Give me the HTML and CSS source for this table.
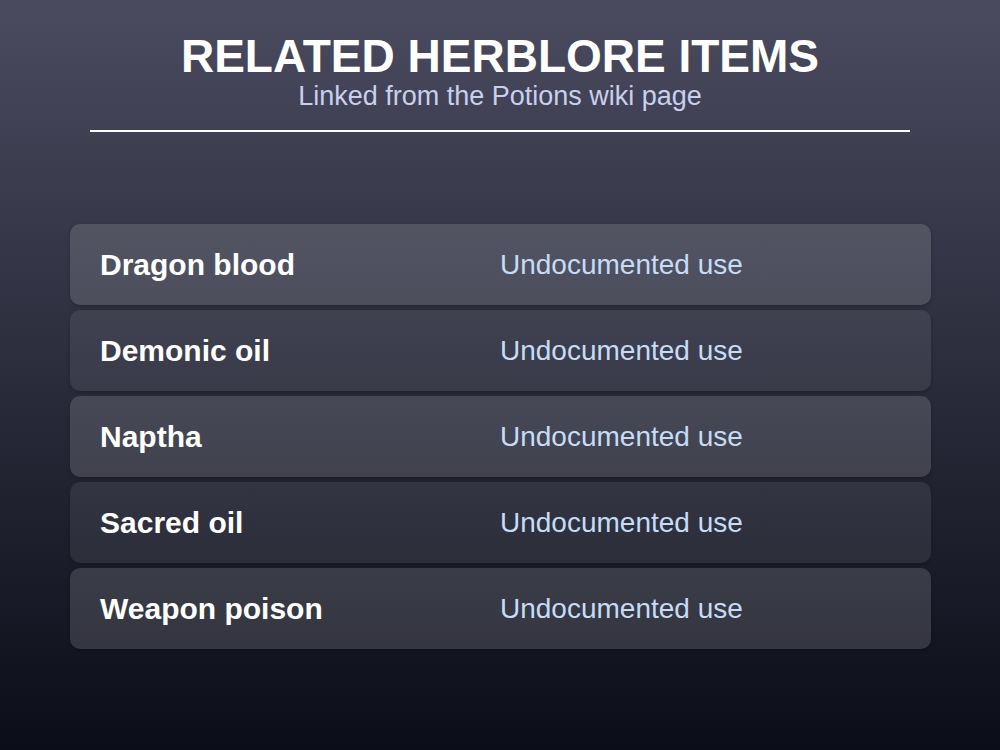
FILE: index.html
```html
<!DOCTYPE html>
<html lang="en">
<head>
  <meta charset="UTF-8" />
  <title>Related Herblore Items</title>
  <link rel="stylesheet" href="styles.css">
</head>
<body>

  <div class="header">
    <h1>RELATED HERBLORE ITEMS</h1>
    <p class="subtitle">Linked from the Potions wiki page</p>
  </div>

  <!-- Seznam položek -->
  <div class="items">
    <div class="row">
      <span class="name">Dragon blood</span>
      <span class="use">Undocumented use</span>
    </div>
    <div class="row">
      <span class="name">Demonic oil</span>
      <span class="use">Undocumented use</span>
    </div>
    <div class="row">
      <span class="name">Naptha</span>
      <span class="use">Undocumented use</span>
    </div>
    <div class="row">
      <span class="name">Sacred oil</span>
      <span class="use">Undocumented use</span>
    </div>
    <div class="row">
      <span class="name">Weapon poison</span>
      <span class="use">Undocumented use</span>
    </div>
  </div>

</body>
</html>
```

FILE: styles.css
```css
* {
  margin: 0;
  padding: 0;
  box-sizing: border-box;
}
body, html {
  height: 100%;
  overflow: hidden;
  font-family: 'Liberation Sans', Arial, sans-serif;
}

body {
  background: linear-gradient(180deg, #4a4b5f 0%, #0b0d18 100%);
  color: white;
  display: flex;
  flex-direction: column;
  align-items: center;
}

.header {
  width: 820px;
  margin-top: 31px;
  padding-bottom: 18px;
  border-bottom: 2px solid #ffffff;
  text-align: center;
}

h1 {
  font-size: 46px;
  font-weight: bold;
  line-height: 50px;
}

.subtitle {
  font-size: 27px;
  line-height: 31px;
  color: #c9d0ee;
}

.items {
  width: 861px;
  margin-top: 92px;
  margin-left: 1px;
  display: flex;
  flex-direction: column;
  gap: 5px;
}

.row {
  height: 81px;
  display: flex;
  align-items: center;
  padding-left: 30px;
  border-radius: 10px;
  background: rgba(255, 255, 255, 0.08);
  box-shadow: 0 2px 4px rgba(0, 0, 0, 0.2);
}
.row:nth-child(odd) {
  background: rgba(255, 255, 255, 0.14);
}

.name {
  width: 400px;
  font-size: 30px;
  font-weight: bold;
}

.use {
  font-size: 28px;
  color: #c6dcf6;
}
```
